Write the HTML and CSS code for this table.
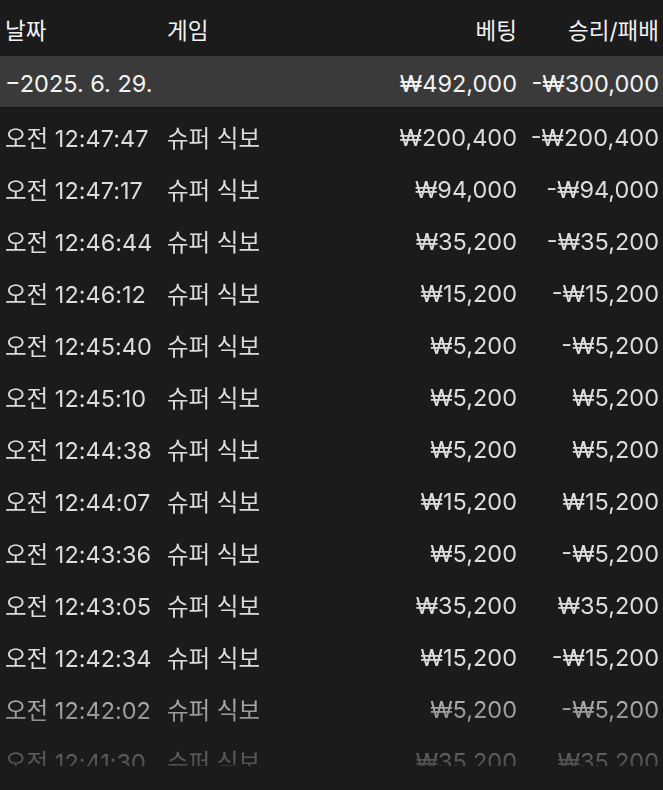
FILE: index.html
```html
<!DOCTYPE html>
<html lang="ko">
<head>
    <meta charset="UTF-8">
    <meta name="viewport" content="width=device-width, initial-scale=1.0">
    <title>베팅 내역</title>
    <link rel="stylesheet" href="styles.css">
</head>
<body>
    <div class="history">
        <div class="row header-row">
            <div>날짜</div>
            <div>게임</div>
            <div class="num">베팅</div>
            <div class="num">승리/패배</div>
        </div>

        <div class="row date-row">
            <div class="date-label">&minus;2025. 6. 29.</div>
            <div></div>
            <div class="num">₩492,000</div>
            <div class="num">-₩300,000</div>
        </div>

        <div class="list">
            <div class="row"><div>오전 12:47:47</div><div>슈퍼 식보</div><div class="num">₩200,400</div><div class="num">-₩200,400</div></div>
            <div class="row"><div>오전 12:47:17</div><div>슈퍼 식보</div><div class="num">₩94,000</div><div class="num">-₩94,000</div></div>
            <div class="row"><div>오전 12:46:44</div><div>슈퍼 식보</div><div class="num">₩35,200</div><div class="num">-₩35,200</div></div>
            <div class="row"><div>오전 12:46:12</div><div>슈퍼 식보</div><div class="num">₩15,200</div><div class="num">-₩15,200</div></div>
            <div class="row"><div>오전 12:45:40</div><div>슈퍼 식보</div><div class="num">₩5,200</div><div class="num">-₩5,200</div></div>
            <div class="row"><div>오전 12:45:10</div><div>슈퍼 식보</div><div class="num">₩5,200</div><div class="num">₩5,200</div></div>
            <div class="row"><div>오전 12:44:38</div><div>슈퍼 식보</div><div class="num">₩5,200</div><div class="num">₩5,200</div></div>
            <div class="row"><div>오전 12:44:07</div><div>슈퍼 식보</div><div class="num">₩15,200</div><div class="num">₩15,200</div></div>
            <div class="row"><div>오전 12:43:36</div><div>슈퍼 식보</div><div class="num">₩5,200</div><div class="num">-₩5,200</div></div>
            <div class="row"><div>오전 12:43:05</div><div>슈퍼 식보</div><div class="num">₩35,200</div><div class="num">₩35,200</div></div>
            <div class="row"><div>오전 12:42:34</div><div>슈퍼 식보</div><div class="num">₩15,200</div><div class="num">-₩15,200</div></div>
            <div class="row"><div>오전 12:42:02</div><div>슈퍼 식보</div><div class="num">₩5,200</div><div class="num">-₩5,200</div></div>
            <div class="row"><div>오전 12:41:30</div><div>슈퍼 식보</div><div class="num">₩35,200</div><div class="num">₩35,200</div></div>
        </div>
    </div>
</body>
</html>
```

FILE: styles.css
```css
:root {
    --bg-color: #1b1b1b;
    --group-color: #3a3a3a;
    --head-text: #f2f2f2;
    --row-text: #dcdcdc;
}

body {
    margin: 0;
    background: var(--bg-color);
    font-family: 'Inter', 'Noto Sans CJK KR', sans-serif;
    font-size: 23.5px;
    color: var(--row-text);
}

.history {
    height: 766px;
    overflow: hidden;
}

.row {
    display: grid;
    grid-template-columns: 162px 210px 140px 142px;
    align-items: center;
    height: 52px;
    padding: 3px 4px 0 5px;
    box-sizing: border-box;
    white-space: nowrap;
}

.num {
    text-align: right;
}

.header-row {
    height: 56px;
    padding-top: 2px;
    font-size: 22.5px;
    color: var(--head-text);
}

.date-row {
    background: var(--group-color);
    color: var(--head-text);
    border-bottom: 1px solid #141414;
}

.list .row {
    padding-top: 6px;
}

.list {
    -webkit-mask-image: linear-gradient(to bottom, #000 0, #000 560px, rgba(0, 0, 0, 0.12) 100%);
    mask-image: linear-gradient(to bottom, #000 0, #000 560px, rgba(0, 0, 0, 0.12) 100%);
}
```
